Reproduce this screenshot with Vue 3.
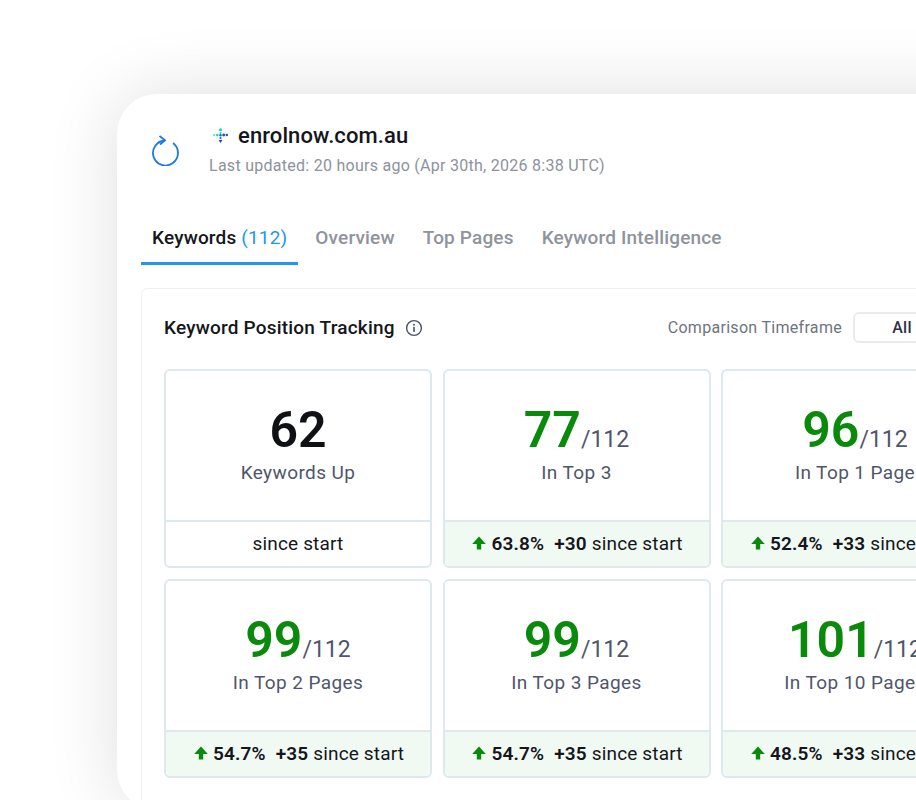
<template>
  <div class="page">
    <div class="window">
      <div class="site-head">
        <svg class="refresh" viewBox="0 0 28 32" width="28" height="32">
          <path d="M14 6.5A12.5 12.5 0 1 0 22 9" fill="none" stroke="#1a7ae6" stroke-width="1.8" />
          <path d="M8.5 2l5.5 4.3-5 4.2" fill="none" stroke="#1a7ae6" stroke-width="1.8" />
        </svg>
        <div class="site-info">
          <div class="site-name">
            <svg class="favicon" viewBox="0 0 16 16" width="17" height="17">
              <circle cx="8" cy="2.6" r="1.5" fill="#2dd4a8" />
              <circle cx="8" cy="5.6" r="1" fill="#2dd4a8" />
              <circle cx="2" cy="7.6" r="1" fill="#5fe0c0" />
              <circle cx="5" cy="7.6" r="1.3" fill="#2dd4a8" />
              <circle cx="8" cy="7.8" r="1.1" fill="#1565c0" />
              <circle cx="11" cy="7.6" r="1.4" fill="#1a56db" />
              <circle cx="14" cy="7.6" r="1.2" fill="#1a56db" />
              <circle cx="8" cy="10.4" r="1" fill="#1a56db" />
              <path d="M6.2 12.2h3.6L8 15z" fill="#1a3fd0" />
            </svg>
            <span>enrolnow.com.au</span>
          </div>
          <div class="updated">Last updated: 20 hours ago (Apr 30th, 2026 8:38 UTC)</div>
        </div>
      </div>

      <div class="tabs">
        <div
          v-for="tab in tabs"
          :key="tab.label"
          class="tab"
          :class="{ active: tab.active }"
        >
          {{ tab.label }}<span v-if="tab.count" class="tab-count"> ({{ tab.count }})</span>
        </div>
      </div>

      <div class="panel">
        <div class="panel-head">
          <div class="panel-title">
            <h3>Keyword Position Tracking</h3>
            <svg viewBox="0 0 18 18" width="18" height="18">
              <circle cx="9" cy="9" r="7.4" fill="none" stroke="#4a5168" stroke-width="1.4" />
              <circle cx="9" cy="5.7" r="1" fill="#4a5168" />
              <rect x="8.2" y="7.9" width="1.6" height="5" fill="#4a5168" />
            </svg>
          </div>
          <div class="timeframe">
            <span>Comparison Timeframe</span>
            <div class="timeframe-btn">All</div>
          </div>
        </div>

        <div class="stats">
          <div v-for="stat in stats" :key="stat.label" class="stat">
            <div class="stat-main">
              <div class="stat-value">
                <span class="num" :class="{ up: stat.total }">{{ stat.value }}</span>
                <span v-if="stat.total" class="total">/{{ stat.total }}</span>
              </div>
              <div class="stat-label">{{ stat.label }}</div>
            </div>
            <div class="stat-foot" :class="{ green: stat.pct }">
              <template v-if="stat.pct">
                <svg class="arrow" viewBox="0 0 14 14" width="14" height="14">
                  <path d="M7 .6 13.8 8H9.2v5.6H4.8V8H.2z" fill="#0a8a0a" />
                </svg>
                <b>{{ stat.pct }}</b>
                <b class="delta">{{ stat.delta }}</b>
              </template>
              <span>since start</span>
            </div>
          </div>
        </div>
      </div>
    </div>
  </div>
</template>

<script setup>
const tabs = [
  { label: 'Keywords', count: 112, active: true },
  { label: 'Overview' },
  { label: 'Top Pages' },
  { label: 'Keyword Intelligence' }
]

const stats = [
  { value: 62, label: 'Keywords Up' },
  { value: 77, total: 112, label: 'In Top 3', pct: '63.8%', delta: '+30' },
  { value: 96, total: 112, label: 'In Top 1 Page', pct: '52.4%', delta: '+33' },
  { value: 99, total: 112, label: 'In Top 2 Pages', pct: '54.7%', delta: '+35' },
  { value: 99, total: 112, label: 'In Top 3 Pages', pct: '54.7%', delta: '+35' },
  { value: 101, total: 112, label: 'In Top 10 Pages', pct: '48.5%', delta: '+33' }
]
</script>

<style>
html, body {
  margin: 0;
  background: #fff;
  overflow: hidden;
}
</style>

<style scoped>
.page {
  height: 706px;
  padding: 94px 0 0 117px;
  overflow: hidden;
  background: #fff;
  font-family: Roboto, "Liberation Sans", sans-serif;
}

.window {
  width: 900px;
  height: 716px;
  box-sizing: border-box;
  padding: 0 0 0 24px;
  background: #fff;
  border-radius: 40px;
  box-shadow: 0 0 70px rgba(0, 0, 0, 0.13);
}

.site-head {
  display: flex;
  align-items: center;
  height: 115px;
}

.refresh {
  flex: none;
  margin-left: 10px;
  margin-top: -3px;
}

.site-info {
  margin-left: 30px;
  margin-top: -2px;
}

.site-name {
  display: flex;
  align-items: center;
  gap: 9px;
  font-size: 22px;
  font-weight: 500;
  letter-spacing: 0.1px;
  color: #14161c;
  margin-left: 3px;
  margin-top: -4px;
}

.updated {
  margin-top: 8px;
  font-size: 16px;
  letter-spacing: 0.27px;
  color: #8d929e;
}

.tabs {
  display: flex;
  height: 56px;
}

.tab {
  padding: 17px 11px 0;
  margin-right: 6px;
  box-sizing: border-box;
  height: 56px;
  font-size: 19px;
  font-weight: 500;
  letter-spacing: 0.17px;
  color: #8f939c;
}

.tab.active {
  color: #14161c;
  border-bottom: 3px solid #2196f3;
}

.tab-count {
  color: #2196f3;
  font-weight: 400;
}

.panel {
  margin-top: 23px;
  height: 520px;
  padding: 0 0 0 22px;
  border: 1px solid #eef0f3;
  border-radius: 6px 0 0 6px;
}

.panel-head {
  display: flex;
  align-items: center;
  justify-content: space-between;
  height: 77px;
  margin-bottom: 3px;
  padding-right: 65px;
}

.panel-title {
  display: flex;
  align-items: center;
  gap: 10px;
}

.panel-title h3 {
  margin: 0;
  font-size: 19px;
  font-weight: 500;
  letter-spacing: 0.2px;
  color: #14161c;
}

.timeframe {
  display: flex;
  align-items: center;
  gap: 11px;
  font-size: 16px;
  letter-spacing: 0.3px;
  color: #6f7480;
}

.timeframe-btn {
  width: 94px;
  height: 27px;
  line-height: 27px;
  text-align: center;
  border: 2px solid #e8ebef;
  border-radius: 6px;
  font-size: 16px;
  font-weight: 500;
  color: #2c3148;
}

.stats {
  display: grid;
  grid-template-columns: repeat(3, 268px);
  grid-auto-rows: 199px;
  column-gap: 10.5px;
  row-gap: 11px;
}

.stat {
  display: flex;
  flex-direction: column;
  border: 2px solid #dfe8ec;
  border-radius: 6px;
  overflow: hidden;
  box-sizing: border-box;
}

.stat-main {
  flex: 1;
  text-align: center;
  padding-top: 30px;
}

.stat-value {
  height: 58px;
  line-height: 58px;
}

.num {
  font-size: 50px;
  font-weight: 600;
  color: #0f1115;
}

.num.up {
  color: #0a8a0a;
}

.total {
  font-size: 23px;
  color: #4f566b;
}

.stat-label {
  margin-top: 2px;
  font-size: 19px;
  letter-spacing: 0.4px;
  color: #4f566b;
}

.stat-foot {
  display: flex;
  align-items: center;
  justify-content: center;
  height: 42px;
  padding-bottom: 2px;
  border-top: 2px solid #dfe8ec;
  font-size: 19px;
  letter-spacing: 0.15px;
  color: #14161c;
  white-space: nowrap;
}

.stat-foot.green {
  background: #f1f9f3;
}

.arrow {
  margin-left: 2px;
}

.stat-foot b {
  font-weight: 600;
  margin-left: 5px;
}

.stat-foot .delta {
  margin-left: 10px;
  margin-right: 5px;
}
</style>
